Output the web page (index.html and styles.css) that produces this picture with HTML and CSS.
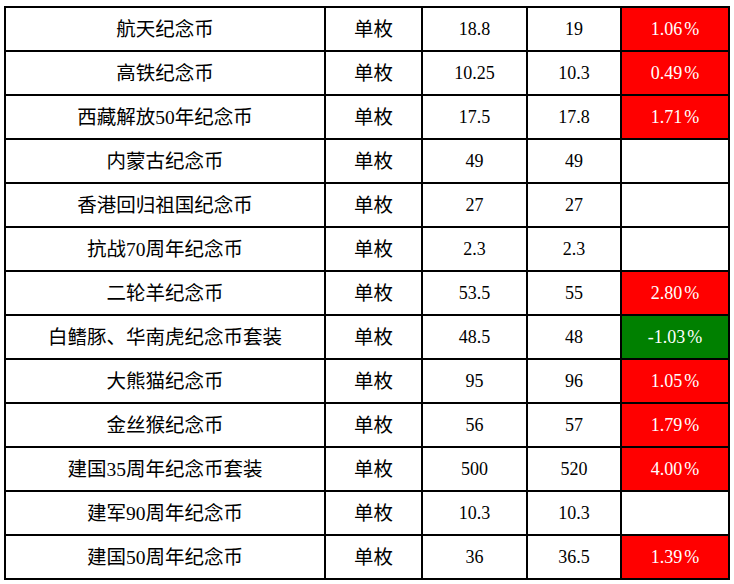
FILE: index.html
```html
<!DOCTYPE html>
<html lang="zh">
<head>
<meta charset="utf-8">
<link rel="stylesheet" href="styles.css">
</head>
<body>
<div class="wrap">
<table class="coins">
<colgroup>
<col class="c-name"><col class="c-unit"><col class="c-a"><col class="c-b"><col class="c-pct">
</colgroup>
<tbody>
<tr><td class="cjk">航天纪念币</td><td class="cjk">单枚</td><td>18.8</td><td>19</td><td class="up">1.06<span class="pc">%</span></td></tr>
<tr><td class="cjk">高铁纪念币</td><td class="cjk">单枚</td><td>10.25</td><td>10.3</td><td class="up">0.49<span class="pc">%</span></td></tr>
<tr><td class="cjk">西藏解放50年纪念币</td><td class="cjk">单枚</td><td>17.5</td><td>17.8</td><td class="up">1.71<span class="pc">%</span></td></tr>
<tr><td class="cjk">内蒙古纪念币</td><td class="cjk">单枚</td><td>49</td><td>49</td><td></td></tr>
<tr><td class="cjk">香港回归祖国纪念币</td><td class="cjk">单枚</td><td>27</td><td>27</td><td></td></tr>
<tr><td class="cjk">抗战70周年纪念币</td><td class="cjk">单枚</td><td>2.3</td><td>2.3</td><td></td></tr>
<tr><td class="cjk">二轮羊纪念币</td><td class="cjk">单枚</td><td>53.5</td><td>55</td><td class="up">2.80<span class="pc">%</span></td></tr>
<tr><td class="cjk">白鳍豚、华南虎纪念币套装</td><td class="cjk">单枚</td><td>48.5</td><td>48</td><td class="down">-1.03<span class="pc">%</span></td></tr>
<tr><td class="cjk">大熊猫纪念币</td><td class="cjk">单枚</td><td>95</td><td>96</td><td class="up">1.05<span class="pc">%</span></td></tr>
<tr><td class="cjk">金丝猴纪念币</td><td class="cjk">单枚</td><td>56</td><td>57</td><td class="up">1.79<span class="pc">%</span></td></tr>
<tr><td class="cjk">建国35周年纪念币套装</td><td class="cjk">单枚</td><td>500</td><td>520</td><td class="up">4.00<span class="pc">%</span></td></tr>
<tr><td class="cjk">建军90周年纪念币</td><td class="cjk">单枚</td><td>10.3</td><td>10.3</td><td></td></tr>
<tr><td class="cjk">建国50周年纪念币</td><td class="cjk">单枚</td><td>36</td><td>36.5</td><td class="up">1.39<span class="pc">%</span></td></tr>
</tbody>
</table>
</div>
</body>
</html>
```
FILE: styles.css
```css
html, body {
  margin: 0;
  padding: 0;
  background: #fff;
}
.wrap {
  padding: 6px 0 0 4px;
}
.coins {
  border-collapse: collapse;
  table-layout: fixed;
  width: 724px;
  font-family: "Liberation Serif", "Noto Sans CJK SC", serif;
  font-size: 18px;
  color: #000;
}
.c-name { width: 320px; }
.c-unit { width: 97px; }
.c-a { width: 105px; }
.c-b { width: 94px; }
.c-pct { width: 108px; }
.coins td {
  border: 2px solid #000;
  height: 42px;
  padding: 0;
  text-align: center;
  vertical-align: middle;
}
.coins td.cjk {
  font-size: 19.5px;
  height: 39px;
  padding-bottom: 3px;
}
.coins td.up {
  background: #ff0000;
  color: #fff;
}
.coins td.down {
  background: #008000;
  color: #fff;
}
.pc {
  margin-left: 2px;
}
```
